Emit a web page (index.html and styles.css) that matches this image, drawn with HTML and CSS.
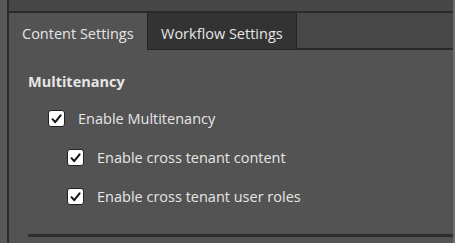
FILE: index.html
```html
<!DOCTYPE html>
<html lang="en">
<head>
    <meta charset="UTF-8">
    <title>Settings</title>
    <link rel="stylesheet" href="styles.css">
</head>
<body>
    <div class="shell">
        <div class="topband"></div>
        <div class="row">
            <div class="leftstrip"></div>
            <div class="panel">
                <!-- tab bar -->
                <div class="tabs">
                    <div class="tab active">Content Settings</div>
                    <div class="tab">Workflow Settings</div>
                    <div class="tab-fill"></div>
                </div>
                <!-- content -->
                <div class="content">
                    <h2>Multitenancy</h2>
                    <label class="check level1">
                        <span class="box"><svg width="11" height="10" viewBox="0 0 11 10"><path d="M1.5 5.2 L4.2 8.2 L9.6 1.4" fill="none" stroke="#111" stroke-width="2" stroke-linecap="round" stroke-linejoin="round"/></svg></span>
                        Enable Multitenancy
                    </label>
                    <label class="check level2">
                        <span class="box"><svg width="11" height="10" viewBox="0 0 11 10"><path d="M1.5 5.2 L4.2 8.2 L9.6 1.4" fill="none" stroke="#111" stroke-width="2" stroke-linecap="round" stroke-linejoin="round"/></svg></span>
                        Enable cross tenant content
                    </label>
                    <label class="check level2">
                        <span class="box"><svg width="11" height="10" viewBox="0 0 11 10"><path d="M1.5 5.2 L4.2 8.2 L9.6 1.4" fill="none" stroke="#111" stroke-width="2" stroke-linecap="round" stroke-linejoin="round"/></svg></span>
                        Enable cross tenant user roles
                    </label>
                    <div class="divider"></div>
                </div>
            </div>
            <div class="rightedge"></div>
        </div>
    </div>
</body>
</html>
```

FILE: styles.css
```css
body {
    margin: 0;
    background-color: #474747;
    font-family: 'Open Sans', sans-serif;
    color: #e6e6e6;
}
.shell {
    width: 455px;
    height: 243px;
    display: flex;
    flex-direction: column;
    overflow: hidden;
}
.topband {
    height: 11px;
    background-color: #474747;
    border-bottom: 2px solid #2a2a2a;
    margin-left: 7px;
}
.row {
    flex: 1;
    display: flex;
    margin-top: -13px;
}
.leftstrip {
    width: 7px;
    background-color: #595959;
    border-right: 2px solid #2c2c2c;
}
.rightedge {
    width: 2px;
    background-color: #6e6e6e;
}
.panel {
    flex: 1;
    display: flex;
    flex-direction: column;
    background-color: #535353;
    margin-top: 13px;
}
.tabs {
    display: flex;
    height: 37px;
}
.tab {
    display: flex;
    align-items: center;
    padding: 4px 13px 0 13px;
    font-size: 14.5px;
    background-color: #333333;
    border: 1px solid #252525;
    border-top: none;
}
.tab.active {
    background-color: #535353;
    border: none;
    width: 112px;
}
.tab-fill {
    flex: 1;
    background-color: #484848;
    border-bottom: 2px solid #2a2a2a;
}
.content {
    flex: 1;
    display: flex;
    flex-direction: column;
    padding-left: 19px;
}
h2 {
    font-size: 14.5px;
    font-weight: bold;
    margin: 22px 0 18px 0;
}
.check {
    display: flex;
    align-items: center;
    font-size: 14.5px;
    height: 19px;
    margin-bottom: 20px;
}
.level1 {
    padding-left: 20px;
}
.level2 {
    padding-left: 39px;
}
.box {
    width: 15px;
    height: 15px;
    background-color: #ffffff;
    border: 1px solid #222;
    border-radius: 3px;
    display: flex;
    align-items: center;
    justify-content: center;
    margin-right: 13px;
}
.divider {
    margin-top: auto;
    height: 3px;
    background-color: #2e2e2e;
    margin-bottom: 6px;
}
```
